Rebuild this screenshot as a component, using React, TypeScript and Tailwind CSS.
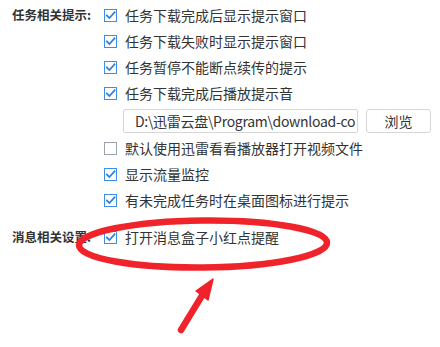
import React from "react";

const FONT = '"Microsoft YaHei", "Noto Sans CJK SC", "Noto Sans", sans-serif';

function Check({ checked }: { checked: boolean }) {
  return (
    <span className="relative w-[13px] h-[13px] shrink-0 border border-[#9ca3af] bg-white">
      {checked && (
        <svg
          className="absolute -left-px -top-px"
          width="13"
          height="13"
          viewBox="0 0 13 13"
          fill="none"
        >
          <rect x="0.5" y="0.5" width="12" height="12" stroke="#3d8ee6" />
          <path
            d="M2.8 6.4 L5.4 9 L10.6 3.2"
            stroke="#2f7fe0"
            strokeWidth="1.7"
            strokeLinecap="square"
          />
        </svg>
      )}
    </span>
  );
}

function Row({ checked, text }: { checked: boolean; text: string }) {
  return (
    <div className="h-[26px] flex items-center gap-[8px]">
      <Check checked={checked} />
      <span className="text-[14px] text-[#333] whitespace-nowrap">{text}</span>
    </div>
  );
}

export default function App() {
  return (
    <div
      className="relative w-[440px] h-[347px] bg-white overflow-hidden"
      style={{ fontFamily: FONT }}
    >
      <div className="pt-[2px] pl-[12px]">
        {/* 任务相关提示 */}
        <div className="flex">
          <div className="w-[92px] h-[26px] flex items-center text-[12.5px] font-bold text-[#333]">
            任务相关提示:
          </div>
          <div className="flex flex-col">
            <Row checked text="任务下载完成后显示提示窗口" />
            <Row checked text="任务下载失败时显示提示窗口" />
            <Row checked text="任务暂停不能断点续传的提示" />
            <Row checked text="任务下载完成后播放提示音" />
            <div className="mt-[3px] ml-[19px] flex gap-[8px] h-[24px]">
              <div className="w-[235px] h-full border border-[#d6d6d6] rounded-[2px] flex items-center pl-[11px] overflow-hidden">
                <span className="text-[14px] text-[#333] whitespace-nowrap tracking-[-0.3px]">
                  D:\迅雷云盘\Program\download-co
                </span>
              </div>
              <button className="w-[65px] h-full border border-[#d6d6d6] rounded-[3px] bg-white text-[14px] text-[#333]">
                浏览
              </button>
            </div>
            <div className="mt-[2px]">
              <Row checked={false} text="默认使用迅雷看看播放器打开视频文件" />
              <Row checked text="显示流量监控" />
              <Row checked text="有未完成任务时在桌面图标进行提示" />
            </div>
          </div>
        </div>

        {/* 消息相关设置 */}
        <div className="flex mt-[11px]">
          <div className="w-[92px] h-[26px] flex items-center text-[12.5px] font-bold text-[#333]">
            消息相关设置:
          </div>
          <Row checked text="打开消息盒子小红点提醒" />
        </div>
      </div>

      {/* red annotation */}
      <svg
        className="absolute left-0 top-0 pointer-events-none"
        width="440"
        height="347"
        viewBox="0 0 440 347"
      >
        <ellipse
          cx="203"
          cy="244"
          rx="124"
          ry="23.5"
          fill="none"
          stroke="#f0232a"
          strokeWidth="6.5"
          transform="rotate(-0.6 203 244)"
        />
        <line
          x1="181"
          y1="330"
          x2="203"
          y2="294"
          stroke="#f0232a"
          strokeWidth="6.5"
          strokeLinecap="round"
        />
        <path d="M213 279 L196 291 L208 300 Z" fill="#f0232a" stroke="#f0232a" strokeWidth="1.5" strokeLinejoin="round" />
      </svg>
    </div>
  );
}
